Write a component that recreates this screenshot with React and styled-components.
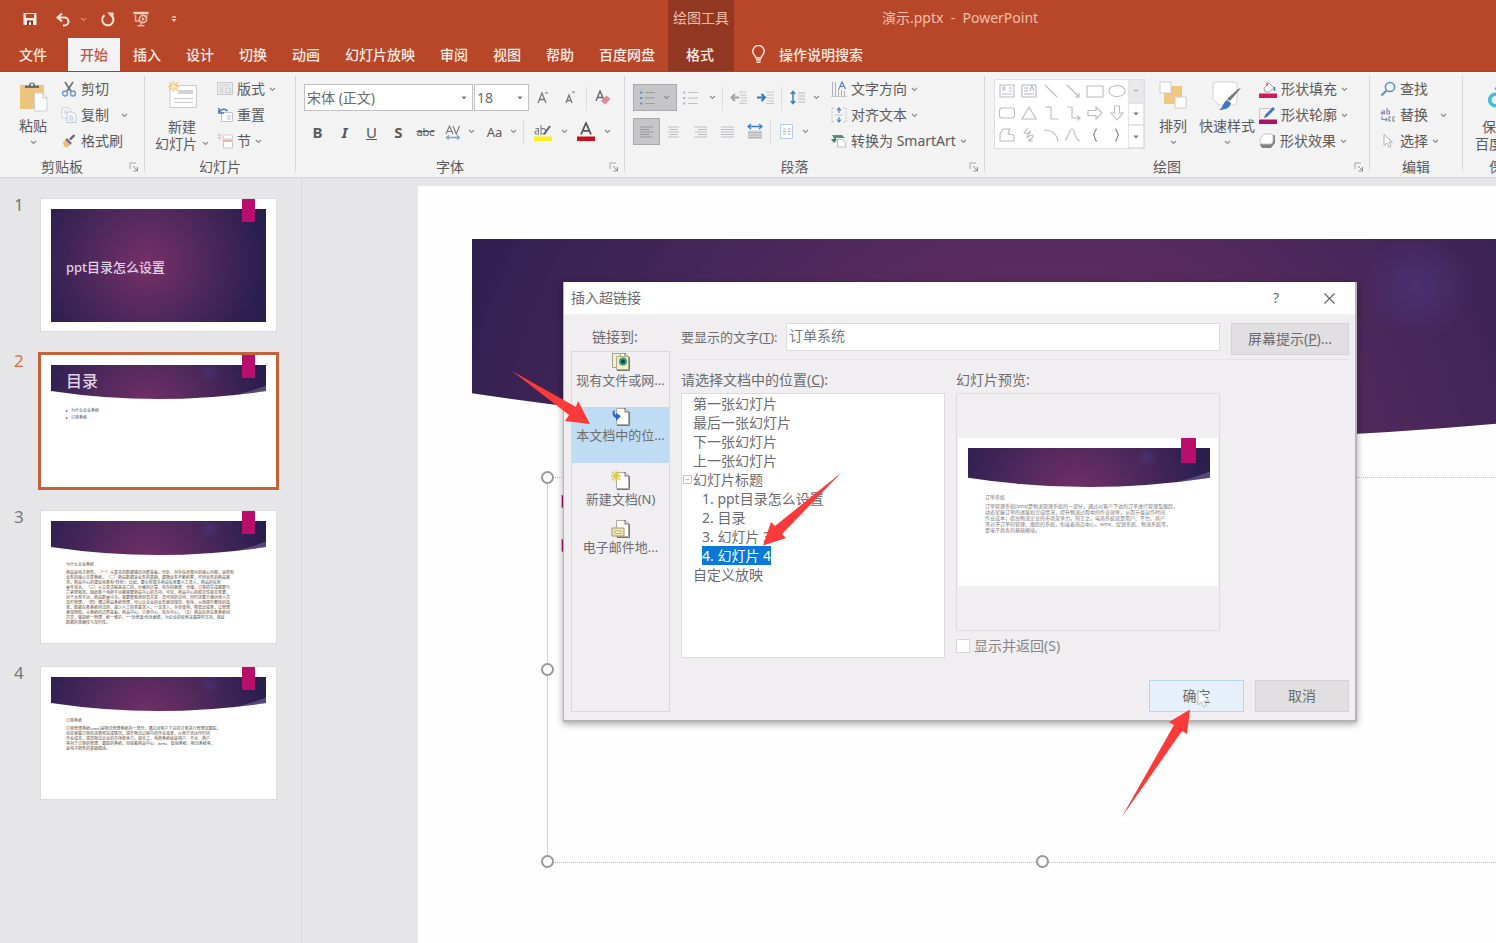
import React from "react";
import styled, { createGlobalStyle } from "styled-components";

const GlobalStyle = createGlobalStyle`
  *, *::before, *::after { box-sizing: border-box; }
  body { margin: 0; background: #e6e6e8; }
  body, button, input, select {
    font-family: "Noto Sans", "Noto Sans CJK SC", sans-serif;
    font-size: 14px;
    line-height: 18px;
  }
  button { border: 0; padding: 0; margin: 0; background: none; color: inherit; text-align: left; }
  ul, h1, h2, p { margin: 0; padding: 0; list-style: none; font-weight: 400; }
`;

const Window = styled.div`
  position: relative;
  display: flex;
  flex-direction: column;
  height: 100vh;
  overflow: hidden;
  color: #5a5a5c;
`;

/* ---------- title bar and tabs ---------- */

const Header = styled.header`
  display: flex;
  flex: none;
  background: #b8472a;
  border-bottom: 1px solid #b53d10;
  color: #ffe9e0;
`;

const HeaderColumn = styled.div`
  display: flex;
  flex-direction: column;
  flex: ${(p) => (p.$grow ? "1" : "none")};
  background: ${(p) => (p.$dark ? "#923822" : "transparent")};
`;

const QuickAccess = styled.div`
  display: flex;
  align-items: center;
  height: 38px;
  padding-left: 20px;
`;

const QuickButton = styled.button`
  display: flex;
  justify-content: center;
  width: ${(p) => p.$width}px;
  margin-right: ${(p) => p.$after || 0}px;
`;

const TabBar = styled.nav`
  display: flex;
  gap: 1px;
  height: 33px;
  padding-right: 1px;
`;

const Tab = styled.button`
  height: 33px;
  padding: ${(p) => (p.$file ? "0 20px 0 19px" : "0 12px")};
  font-weight: 500;
  color: ${(p) => (p.$active ? "#c4543f" : "#ffece4")};
  background: ${(p) => (p.$active ? "#f3f3f3" : "transparent")};
`;

const ContextTitle = styled.div`
  height: 38px;
  padding: 9px 5px 0;
  color: #f0bda9;
`;

const ContextTab = styled(Tab)`
  padding: 0 18px;
`;

const DocumentTitle = styled.h1`
  height: 38px;
  padding: 9px 0 0 148px;
  font-size: 14px;
  line-height: 18px;
  color: #f6bfa9;
  white-space: pre;
`;

const TellMe = styled.button`
  display: flex;
  align-items: center;
  gap: 13px;
  height: 33px;
  padding-left: 17px;
  font-weight: 500;
`;

/* ---------- ribbon ---------- */

const RibbonBar = styled.section`
  display: flex;
  flex: none;
  height: 106px;
  padding-top: 4px;
  overflow: hidden;
  background: #f3f3f3;
  border-bottom: 1px solid #d6d6d8;
`;

const Divider = styled.div`
  flex: none;
  width: 1px;
  height: 95px;
  background: #d5d5d7;
`;

const GroupBox = styled.div`
  display: flex;
  flex-direction: column;
  flex: none;
  width: ${(p) => p.$width}px;
`;

const GroupBody = styled.div`
  display: flex;
  height: 78px;
  padding-left: ${(p) => p.$left}px;
`;

const GroupFooter = styled.div`
  display: flex;
  align-items: center;
  height: 23px;
  padding-top: 3px;
`;

const GroupLabel = styled.div`
  flex: 1;
  text-align: center;
`;

const Launcher = styled.button`
  width: 20px;
  padding-left: 5px;
`;

const BigButton = styled.button`
  display: flex;
  flex-direction: column;
  align-items: center;
  flex: none;
  width: ${(p) => p.$width}px;
  margin-right: ${(p) => p.$after || 0}px;
  padding-top: 5px;
  white-space: nowrap;
  line-height: 17px;
`;

const BigIcon = styled.span`
  display: block;
  height: ${(p) => (p.$tall ? 37 : 30)}px;
`;

const BigLabel = styled.span`
  display: flex;
  align-items: center;
  gap: 5px;
  margin-top: ${(p) => (p.$tight ? 0 : 6)}px;
`;

const CommandList = styled.div`
  display: grid;
  grid-auto-rows: 26px;
  justify-items: start;
  margin-left: ${(p) => p.$left || 0}px;
`;

const Command = styled.button`
  display: flex;
  align-items: center;
  white-space: nowrap;
  gap: 4px;
`;

const CommandArrow = styled.span`
  display: flex;
  margin-left: ${(p) => (p.$wide ? 8 : 0)}px;
`;

const ToolRows = styled.div`
  display: flex;
  flex-direction: column;
  gap: 7px;
  padding-top: 8px;
`;

const ToolRow = styled.div`
  display: flex;
  align-items: center;
  height: 27px;
`;

const Tool = styled.button`
  display: flex;
  align-items: center;
  justify-content: center;
  flex: none;
  gap: 8px;
  width: ${(p) => p.$width || 27}px;
  height: 27px;
  margin-left: ${(p) => p.$left || 0}px;
  border: 1px solid ${(p) => (p.$on ? "#a9a9ab" : "transparent")};
  background: ${(p) => (p.$on ? "#c6c6c8" : "transparent")};
  font-size: ${(p) => p.$size || 15}px;
  font-weight: ${(p) => (p.$bold ? 700 : 400)};
  font-style: ${(p) => (p.$italic ? "italic" : "normal")};
  text-decoration: ${(p) => p.$line || "none"};
`;

const ToolDivider = styled.div`
  width: 1px;
  height: 24px;
  margin: 0 ${(p) => p.$gap}px;
  background: #dcdcde;
`;

const Combo = styled.label`
  display: flex;
  align-items: center;
  width: ${(p) => p.$width}px;
  height: 27px;
  margin-right: 1px;
  padding-right: 5px;
  background: #fff;
  border: 1px solid #c2c2c4;
`;

const ComboSelect = styled.select`
  flex: 1;
  min-width: 0;
  padding: 0 2px;
  border: 0;
  background: transparent;
  color: #6a6a6c;
  appearance: none;
`;

const Gallery = styled.div`
  display: flex;
  width: 151px;
  height: 70px;
  margin: 3px 13px 0 0;
  background: #fff;
  border: 1px solid #dedee0;
`;

const GalleryGrid = styled.div`
  display: grid;
  flex: 1;
  grid-template-columns: repeat(6, 22px);
  grid-auto-rows: 22px;
  padding-left: 1px;
`;

const GalleryItem = styled.button`
  display: flex;
  align-items: center;
  justify-content: center;
`;

const GalleryScroll = styled.div`
  display: grid;
  grid-template-rows: repeat(3, 1fr);
  width: 16px;
`;

const ScrollButton = styled.button`
  display: flex;
  align-items: center;
  justify-content: center;
  border: 1px solid #e4e4e6;
  background: ${(p) => (p.$off ? "#e9e9eb" : "#fff")};
`;

/* ---------- workspace ---------- */

const Workspace = styled.main`
  display: flex;
  flex: 1;
  min-height: 0;
  background: #e6e6e8;
`;

const ThumbPane = styled.aside`
  flex: none;
  width: 302px;
  padding: 18px 0 0 14px;
  border-right: 1px solid #d8d8da;
`;

const ThumbRow = styled.button`
  display: flex;
  align-items: flex-start;
  width: 100%;
  height: 156px;
`;

const ThumbNumber = styled.span`
  width: 24px;
  font-size: 17px;
  color: ${(p) => (p.$active ? "#d8694e" : "#77777a")};
`;

const ThumbFrame = styled.span`
  display: block;
  margin: ${(p) => (p.$active ? "0" : "3px")};
  border: ${(p) => (p.$active ? "3px solid #c4623a" : "0")};
`;

const SlideCard = styled.span`
  position: relative;
  display: block;
  width: ${(p) => p.$width}px;
  height: ${(p) => p.$height}px;
  padding: 10px;
  background: #fff;
  box-shadow: ${(p) => (p.$flat ? "none" : "0 0 0 1px #dcdcde")};
`;

const SlideTab = styled.span`
  position: absolute;
  top: 0;
  right: ${(p) => p.$right}px;
  width: ${(p) => p.$width}px;
  height: ${(p) => p.$height}px;
  background: #b90f6c;
`;

const SlideTitle = styled.span`
  position: absolute;
  left: 25px;
  top: ${(p) => p.$top}px;
  font-size: ${(p) => p.$size}px;
  font-weight: 500;
  color: #e2d2e6;
`;

const SlideText = styled.span`
  display: block;
  padding: ${(p) => p.$top}px 0 0 ${(p) => p.$left}px;
  font-size: ${(p) => p.$size || 4}px;
  line-height: ${(p) => p.$line}px;
  color: ${(p) => (p.$size ? "#77777a" : "#4c4c4e")};
  white-space: nowrap;
`;

const SlideLine = styled.span`
  display: block;
  margin-bottom: ${(p) => (p.$heading ? 3 : 0)}px;
  &::before {
    content: ${(p) => (p.$bullet ? '"▸"' : "none")};
    margin-right: 3px;
    color: #b90f6c;
  }
`;

const Canvas = styled.section`
  flex: 1;
  min-width: 0;
  padding: 8px 0 0 116px;
  overflow: hidden;
`;

const BigSlide = styled.div`
  position: relative;
  height: 100%;
  padding: 53px 0 0 54px;
  background: #fefefe;
  overflow: hidden;
`;

const Placeholder = styled.div`
  position: absolute;
  left: 129px;
  top: 291px;
  width: 991px;
  height: 386px;
  border: 1px dotted #b9b9bb;
  border-left: 1px solid #cfcfd1;
`;

const Handle = styled.span`
  position: absolute;
  left: ${(p) => p.$x};
  top: ${(p) => p.$y};
  width: 13px;
  height: 13px;
  margin: -7px;
  border: 2px solid #98989a;
  border-radius: 50%;
  background: #fff;
`;

const BulletMarks = styled.ul`
  padding: 14px 0 0 12px;
  color: #96105c;
  li { height: 44px; }
`;

/* ---------- dialog ---------- */

const DialogBox = styled.section`
  position: absolute;
  left: 563px;
  top: 282px;
  width: 794px;
  height: 440px;
  display: flex;
  flex-direction: column;
  background: #f0eef1;
  border: 1px solid #b4b4b6;
  border-width: 0 2px 2px 1px;
  box-shadow: 0 2px 7px rgba(0, 0, 0, 0.35);
  color: #6c6c6f;
`;

const DialogHeader = styled.div`
  display: flex;
  align-items: center;
  height: 32px;
  padding: 0 20px 0 7px;
  background: #fff;
`;

const DialogTitle = styled.h2`
  flex: 1;
  font-size: 14px;
`;

const DialogControl = styled.button`
  display: flex;
  justify-content: center;
  width: 12px;
  margin-left: 41px;
`;

const DialogBody = styled.div`
  display: flex;
  flex: 1;
  gap: 11px;
  padding: 9px 6px 8px 7px;
`;

const LinkColumn = styled.div`
  display: flex;
  flex-direction: column;
  width: 99px;
`;

const LinkHeading = styled.div`
  height: 28px;
  padding: 5px 0 0 21px;
`;

const LinkList = styled.div`
  flex: 1;
  border: 1px solid #d9d8db;
`;

const LinkItem = styled.button`
  display: flex;
  flex-direction: column;
  align-items: center;
  width: 100%;
  height: ${(p) => p.$height}px;
  padding-top: ${(p) => p.$top}px;
  background: ${(p) => (p.$active ? "#c0dcf5" : "transparent")};
  font-size: 13px;
  white-space: nowrap;
`;

const MainColumn = styled.div`
  display: flex;
  flex: 1;
  flex-direction: column;
`;

const TextRow = styled.div`
  display: flex;
  align-items: flex-start;
  height: 37px;
  border-bottom: 1px solid #e4e2e6;
`;

const TextLabel = styled.label`
  width: 105px;
  padding-top: 5px;
  font-size: 13px;
  white-space: nowrap;
`;

const TextInput = styled.input`
  flex: 1;
  min-width: 0;
  height: 28px;
  margin-right: 11px;
  padding: 0 2px 5px;
  border: 1px solid #dddce0;
  background: #fff;
  color: #77777a;
`;

const DialogButton = styled.button`
  width: ${(p) => p.$width}px;
  height: 32px;
  text-align: center;
  border: 1px solid ${(p) => (p.$primary ? "#b5d5ec" : "#d3d2d5")};
  background: ${(p) => (p.$primary ? "#e5f0fb" : "#e1dfe2")};
`;

const Columns = styled.div`
  display: flex;
  gap: 11px;
  height: 298px;
  padding-top: 11px;
`;

const Column = styled.div`
  display: flex;
  flex-direction: column;
  width: 264px;
`;

const ColumnLabel = styled.div`
  height: 22px;
`;

const Tree = styled.ul`
  height: 265px;
  padding: 0 0 0 5px;
  border: 1px solid #dcdbde;
  background: #fff;
  line-height: 19px;
`;

const TreeItem = styled.li`
  display: flex;
  align-items: center;
  height: 19px;
  padding-left: ${(p) => (p.$level ? 15 : p.$open ? 0 : 6)}px;
`;

const TreeToggle = styled.span`
  display: flex;
  width: 10px;
  margin-left: -4px;
`;

const TreeLabel = styled.button`
  height: 19px;
  line-height: 18px;
  white-space: nowrap;
  color: ${(p) => (p.$selected ? "#fff" : "inherit")};
  background: ${(p) => (p.$selected ? "#0a78d7" : "transparent")};
`;

const Preview = styled.div`
  display: flex;
  align-items: center;
  height: 238px;
  margin-bottom: 6px;
  padding: 0 1px;
  border: 1px solid #dcdbde;
`;

const CheckLabel = styled.label`
  display: flex;
  align-items: center;
  gap: 4px;
  color: #858588;
`;

const CheckInput = styled.input`
  appearance: none;
  width: 14px;
  height: 14px;
  margin: 0;
  border: 1px solid #d6d5d8;
  background: #fff;
`;

const DialogFooter = styled.div`
  display: flex;
  justify-content: flex-end;
  gap: 11px;
  margin-top: auto;
`;

const Annotations = styled.svg`
  position: absolute;
  left: 0;
  top: 0;
  pointer-events: none;
`;

/* ---------- icons ---------- */

const IconSvg = styled.svg`
  display: block;
  flex: none;
  fill: none;
`;

const Icon = ({ w = 16, h = w, children }) => (
  <IconSvg width={w} height={h} viewBox={`0 0 ${w} ${h}`} aria-hidden="true">
    {children}
  </IconSvg>
);

const Chevron = ({ color = "#8c8c8e" }) => (
  <Icon w={7} h={5}>
    <path d="M1 1l2.5 2.4L6 1" stroke={color} strokeWidth="1.1" />
  </Icon>
);

const Caret = ({ color = "#77777a" }) => (
  <Icon w={6} h={4}>
    <path d="M0.5 0.5h5L3 3.5z" fill={color} />
  </Icon>
);

const SaveIcon = () => (
  <Icon w={14}>
    <path d="M0.5 1h13v12h-13z" fill="#ffe9e0" />
    <path d="M3 2h8v4H3z" fill="#b8472a" />
    <path d="M4 8.5h6V13H4z" fill="#8a3520" />
    <path d="M6 10h2v3H6z" fill="#fff" />
  </Icon>
);

const UndoIcon = () => (
  <Icon w={15}>
    <path d="M6 1.5L1.5 5.5 6 9.5M2 5.5h6.5a4 4 0 010 8H7" stroke="#ffe4d8" strokeWidth="2.1" />
  </Icon>
);

const RedoIcon = () => (
  <Icon w={15}>
    <path d="M4.5 3.2A5.6 5.6 0 1010 2.6" stroke="#ffe0c8" strokeWidth="2.1" />
    <path d="M7 0.5h6.500v6.300z" fill="#ffe0c8" />
  </Icon>
);

const SlideShowIcon = () => (
  <Icon w={16}>
    <path d="M0.5 2h15" stroke="#ffd9c4" strokeWidth="2.4" />
    <path d="M2.5 4v6H7M13.5 4v3M8 11v3M4.5 14.8h7" stroke="#f0b09a" strokeWidth="1.6" />
    <circle cx="10" cy="8" r="3.6" stroke="#f5c1ad" strokeWidth="1.6" />
    <path d="M9 6l3 2-3 2z" fill="#f5c1ad" />
  </Icon>
);

const CustomizeIcon = () => (
  <Icon w={6} h={7}>
    <path d="M1 1h4" stroke="#ffe0d2" strokeWidth="1.2" />
    <path d="M0.5 3h5L3 6z" fill="#ffe0d2" />
  </Icon>
);

const BulbIcon = () => (
  <Icon w={15} h={19}>
    <path d="M5 13c0-2-3.2-3.2-3.2-6.8a5.7 5.7 0 0111.4 0C13.200 9.800 10 11 10 13z" stroke="#ffe4d8" strokeWidth="1.5" />
    <path d="M5 15h5M5.500 17.300h4" stroke="#ffe4d8" strokeWidth="1.500" />
  </Icon>
);

const PasteIcon = () => (
  <Icon w={30} h={31}>
    <path d="M2 4h24v24H2z" fill="#ecc47c" />
    <path d="M7 7V4.500h4a3 3 0 016 0h4V7z" fill="#6d6d72" />
    <circle cx="14" cy="3.800" r="1.200" fill="#f3f3f3" />
    <path d="M16.500 12h8.500l4 5v13H16.500z" fill="#fff" stroke="#d0d0d2" />
    <path d="M25 12v5h4" stroke="#c4c4c6" />
  </Icon>
);

const CutIcon = () => (
  <Icon w={16}>
    <path d="M4 1l6.500 10M12 1L5.500 11" stroke="#6e6e72" strokeWidth="1.600" />
    <circle cx="4" cy="12.500" r="2.500" stroke="#6c9bd0" strokeWidth="1.400" />
    <circle cx="12" cy="12.500" r="2.500" stroke="#6c9bd0" strokeWidth="1.400" />
  </Icon>
);

const CopyIcon = () => (
  <Icon w={16}>
    <path d="M1 .8h6l2.500 2.500V11H1z" fill="#fbfbfc" stroke="#cfcfd4" />
    <path d="M6 5h6l3 3v7.500H6z" fill="#fbfbfc" stroke="#b9c7da" />
    <path d="M3 4h3M3 6h2M8 9h4M8 11h5M8 13h5" stroke="#b4cbe6" />
  </Icon>
);

const BrushIcon = () => (
  <Icon w={16}>
    <path d="M13.500 2L9 6.500" stroke="#66666a" strokeWidth="2.400" />
    <path d="M6 5l5 5-2 2-5-5z" fill="#77777b" />
    <path d="M4 7l5 5-3 2.500c-2 0-4-2-4-5z" fill="#efbd6a" />
  </Icon>
);

const NewSlideIcon = () => (
  <Icon w={31} h={29}>
    <path d="M3 4.500h26.500v22H3z" fill="#fff" stroke="#cbcbce" />
    <path d="M11 9h15v4H11z" fill="#d3d3d6" />
    <path d="M7 17.500h19M7 21.500h19" stroke="#cfcfd2" />
    <path d="M6.500 0v11M1 5.500h11M2.600 1.600l7.800 7.800M10.400 1.600L2.600 9.400" stroke="#f2c47c" strokeWidth="1.500" />
    <circle cx="6.500" cy="5.500" r="2.300" fill="#fbe8c4" />
  </Icon>
);

const LayoutIcon = () => (
  <Icon w={16}>
    <path d="M.5 1.500h15v12H.5z" fill="#ebebed" stroke="#c9c9cc" />
    <path d="M2.500 4h11M2.500 7h4M2.500 9h4M2.500 11h4M9 7h4.500v4.500H9z" stroke="#c8cbd2" />
  </Icon>
);

const ResetIcon = () => (
  <Icon w={16}>
    <path d="M4.500 5.500h11v9h-11z" fill="#fff" stroke="#c3c3c7" />
    <path d="M10 8h4v5h-4z" fill="#e0e0e4" />
    <path d="M2 1v5h5M2.500 5C4 2 8 1 10.500 4" stroke="#4b79b5" strokeWidth="1.600" />
  </Icon>
);

const SectionIcon = () => (
  <Icon w={16}>
    <path d="M6.500 2h9v4h-9z" fill="#fff" stroke="#d0d0d3" />
    <path d="M6.500 8.500h9v6.500h-9z" fill="#fff" stroke="#c6c6ca" />
    <path d="M5 7.300h11" stroke="#e8a393" />
    <path d="M0 1l5 5M5 1L0 6M2.500 0v7" stroke="#f2c98a" />
  </Icon>
);

const GrowFont = ({ down }) => (
  <Icon w={14} h={16}>
    <path d={down ? "M2 13l3-8 3 8M3 10.500h4" : "M1 13l4-10 4 10M2.500 9.500h5"} stroke="#77777a" strokeWidth="1.300" />
    <path d={down ? "M7.500 1.500h4L9.500 3.500z" : "M7.500 3.500h4L9.500 1.500z"} fill="#8e8e92" />
  </Icon>
);

const ClearIcon = () => (
  <Icon w={16}>
    <path d="M1 11L5 1l4 9M2.500 7.500h5" stroke="#66666a" strokeWidth="1.400" />
    <path d="M6 11l5.500-5.500L15.500 9 10 14.500z" fill="#e8899a" />
  </Icon>
);

const SpacingIcon = () => (
  <Icon w={16} h={18}>
    <path d="M1 11L4.500 3 8 11M2.200 8.500h4.600M8 3l3.300 8L14.500 3" stroke="#77777a" strokeWidth="1.100" />
    <path d="M1.500 14.500h13M4 12.500l-2.500 2 2.500 2M12 12.500l2.500 2-2.500 2" stroke="#7aa3d6" strokeWidth="1.300" />
  </Icon>
);

const HighlightIcon = () => (
  <Icon w={18} h={18}>
    <path d="M1.500 5.500h3V11H2a1.600 1.600 0 010-3h2.500M7 2v9h2a2.700 2.700 0 000-5.400H7" stroke="#808084" strokeWidth="1.100" />
    <path d="M16 3l-6 8.500" stroke="#66666a" strokeWidth="2" />
    <path d="M0 13.500h18V18H0z" fill="#f7f01a" />
  </Icon>
);

const FontColorIcon = () => (
  <Icon w={18} h={19}>
    <path d="M4 12.500L9 1l5 11.500M5.500 8.800h7" stroke="#55555a" strokeWidth="1.800" />
    <path d="M0 14.500h18V19H0z" fill="#c8101c" />
  </Icon>
);

const ListIcon = ({ color = "#6d8fbd", line = "#9a9aa0" }) => (
  <Icon w={15} h={14}>
    <path d="M0 1.500h2.500M0 7h2.500M0 12.500h2.500" stroke={color} strokeWidth="2" />
    <path d="M5 1.500h10M5 7h10M5 12.500h10" stroke={line} />
  </Icon>
);

const IndentIcon = ({ out }) => (
  <Icon w={17} h={13}>
    <path d="M9 1h8M10 4h7M10 7h7M10 10h7M9 12.500h8" stroke="#c6c6cb" />
    {out ? (
      <path d="M9 6.500H1.500M5 3L1.500 6.500 5 10" stroke="#a2a2a7" strokeWidth="1.800" />
    ) : (
      <path d="M0 6.500h7.500M4.500 3L8 6.500 4.500 10" stroke="#2f78c4" strokeWidth="2" />
    )}
  </Icon>
);

const LineSpacingIcon = () => (
  <Icon w={15} h={15}>
    <path d="M3 1.500v12M.8 4L3 1.500 5.200 4M.8 11L3 13.500 5.200 11" stroke="#3f7fc4" strokeWidth="1.500" />
    <path d="M8 3h7M8 6h7M8 9h7M8 12h7" stroke="#b9b9be" />
  </Icon>
);

const AlignIcon = ({ kind = "left", color = "#bdbdc2" }) => {
  const path = {
    left: "M0 1h13M0 3.500h9M0 6h13M0 8.500h9M0 11h12",
    center: "M1 1h11M2.500 3.500h8M1 6h11M2.500 8.500h8M1 11h11",
    right: "M0 1h13M4 3.500h9M1 6h12M4 8.500h9M0 11h13",
    full: "M0 1h13M0 3.500h13M0 6h13M0 8.500h13M0 11h13",
  }[kind];
  return (
    <Icon w={13} h={12}>
      <path d={path} stroke={color} />
    </Icon>
  );
};

const DistributeIcon = () => (
  <Icon w={16} h={17}>
    <path d="M1 3.500h14M4 1L1 3.500 4 6M12 1l3 2.500L12 6" stroke="#3f7fc4" strokeWidth="1.400" />
    <path d="M1 7.500h14V16H1z" fill="#d3d3d8" />
    <path d="M1 9.500h14M1 12h14M1 14.500h14" stroke="#b4b4ba" />
  </Icon>
);

const ColumnsIcon = () => (
  <Icon w={13} h={15}>
    <path d="M.5.500h12v14H.5z" fill="#fff" stroke="#b9cbe4" />
    <path d="M3 5h3M3 7.500h3M3 10h3M7.500 5h3M7.500 7.500h3M7.500 10h3" stroke="#9ab4da" />
  </Icon>
);

const DirectionIcon = () => (
  <Icon w={16} h={17}>
    <path d="M1.500 1v14M4.500 1v14M7.500 8v7M10.500 9v6M13.500 10v5" stroke="#b0b0b6" />
    <path d="M8 8l3-7 3.500 7M9.200 5.500h4" stroke="#5b86c2" strokeWidth="1.200" />
    <path d="M0 15.500h16" stroke="#c5c5ca" />
  </Icon>
);

const AlignTextIcon = () => (
  <Icon w={16}>
    <path d="M1 1v14M15 1v14M1 1h3M12 1h3M1 15h3M12 15h3" stroke="#c6c6cc" strokeDasharray="2 1" />
    <path d="M8 1v5M8 10v5M6 3.500L8 1l2 2.500M6 12.500L8 15l2-2.500" stroke="#4a82c2" strokeWidth="1.200" />
    <path d="M4 8h8" stroke="#c4c4ca" />
  </Icon>
);

const SmartArtIcon = () => (
  <Icon w={16}>
    <path d="M1 2h10l3 3H5v4z" fill="#4d9377" />
    <path d="M3 10L0 6h6z" fill="#3d8468" />
    <path d="M6.500 6.500h5l3 3.500v4h-8z" fill="#fff" stroke="#c0c0c6" />
  </Icon>
);

const ArrangeIcon = () => (
  <Icon w={28} h={28}>
    <path d="M11 5h12v12H11zM5 12h12v11H5z" fill="#efc682" />
    <path d="M1 1h11v11H1zM16 16h11v11H16z" fill="#fff" stroke="#cbcbce" />
  </Icon>
);

const QuickStyleIcon = () => (
  <Icon w={30} h={30}>
    <path d="M4 1h18a3 3 0 013 3v17a3 3 0 01-3 3H7l-6-6V4a3 3 0 013-3z" fill="#fff" stroke="#d2d2d5" />
    <path d="M29 7L18 20l-3-2L26 8z" fill="#77777c" />
    <path d="M15 19l4 3c-1 5-6 7-12 7 4-2 4-8 8-10z" fill="#4477ba" />
  </Icon>
);

const FillIcon = () => (
  <Icon w={18} h={17}>
    <path d="M5 7l5-5 5 5-5 4H6z" fill="#fff" stroke="#a4a4a9" />
    <path d="M8 5V1.500" stroke="#e05c4a" strokeWidth="1.400" />
    <path d="M15.500 6v4" stroke="#4a82c2" strokeWidth="1.600" />
    <path d="M0 12.500h18V17H0z" fill="#d6175f" />
  </Icon>
);

const OutlineIcon = () => (
  <Icon w={18} h={17}>
    <path d="M.5 11V1.500H14" stroke="#c6c6cb" />
    <path d="M16 2L8 10l-3 1 1-3 8-8z" fill="#3f78b8" />
    <path d="M0 12.500h18V17H0z" fill="#ad1164" />
  </Icon>
);

const EffectIcon = () => (
  <Icon w={17} h={16}>
    <path d="M5 2h10a1 1 0 011 1v7l-4 5H3l-2-3z" fill="#808085" />
    <path d="M5 1h7a2 2 0 012 2v5a3 3 0 01-3 3H3a2 2 0 01-2-2V6z" fill="#fff" stroke="#c4c4c8" />
  </Icon>
);

const FindIcon = () => (
  <Icon w={16}>
    <circle cx="10" cy="6" r="4.600" stroke="#5e8fca" strokeWidth="1.500" />
    <path d="M6.500 9.500L1.500 14.500" stroke="#5e8fca" strokeWidth="2" />
  </Icon>
);

const ReplaceIcon = () => (
  <Icon w={16}>
    <path d="M1.500 4h3v3h-3V5.500h3M7 1v6h2.500V4H7" stroke="#9a86b8" strokeWidth="1.200" />
    <path d="M2 9.500v3h5M5.500 11L7 12.500 5.500 14" stroke="#6c8fc4" strokeWidth="1.200" />
    <path d="M11 10H9v4h2M15 10h-2v4h2" stroke="#88888c" strokeWidth="1.200" />
  </Icon>
);

const SelectIcon = () => (
  <Icon w={16}>
    <path d="M4 1.500v11l3-2.500 2 4.500 2-1-2-4.300h3.500z" fill="#fff" stroke="#b0b0b4" />
  </Icon>
);

const CloudIcon = () => (
  <Icon w={30} h={31}>
    <path d="M12 14a6.500 6.500 0 112 12" stroke="#e45b68" strokeWidth="3.500" />
    <circle cx="7.500" cy="19" r="5.800" stroke="#3fbfe0" strokeWidth="3.500" />
    <path d="M8 9a7 7 0 0113 0" stroke="#8f9bb5" strokeWidth="3.500" />
  </Icon>
);

const LauncherIcon = () => (
  <Icon w={10}>
    <path d="M1 7V1h6" stroke="#a5a5a8" />
    <path d="M4 4l4 4M8.500 5v4h-4" stroke="#8b8b8e" />
  </Icon>
);

const ShapeGlyph = ({ d, color = "#bcbcc0", width = 1.1 }) => (
  <Icon w={18}>
    <path d={d} stroke={color} strokeWidth={width} />
  </Icon>
);

const shapes = [
  { d: "M2 3h14v12H2zM4 6h4M6 4v4M4 8h3M11 6h3M11 9h3M4 12h10", color: "#b9b9cc" },
  { d: "M2 3h14v12H2zM10 9l2-5 2 5M4 6h4M4 9h4M4 12h10", color: "#b4b4cc" },
  { d: "M3 3l12 12" },
  { d: "M3 3l12 12M15 11v4h-4" },
  { d: "M1 4h16v11H1z" },
  { d: "M9 3.500c5 0 8 2.500 8 5.500s-3 5.500-8 5.500S1 12 1 9s3-5.500 8-5.500z" },
  { d: "M4 4h10a2.500 2.500 0 012.500 2.500v5A2.500 2.500 0 0114 14H4a2.500 2.500 0 01-2.500-2.500v-5A2.500 2.500 0 014 4z" },
  { d: "M9 3l7 12H2z" },
  { d: "M3 3h6v12h7" },
  { d: "M3 3h5v11h8M13 11.500l3 2.500-3 2.500" },
  { d: "M2 6.500h8V3l6 6-6 6v-3.500H2z" },
  { d: "M6.500 2v7H3l6 7 6-7h-3.500V2z" },
  { d: "M5 3h7l-2 4c1 3 5 0 6 3v5H2V8z" },
  { d: "M8 2L4 7l3 1 4-3-4 6 5-2 1 2-4 4M9 12v3h4" },
  { d: "M2 4c8 0 13 3 14 12" },
  { d: "M1 14C4 14 5 3 8 3s3 12 8 12" },
  { d: "M11 3C8 3 9.500 9 7 9c2.500 0 1 6 4 6", color: "#8a8a8d", width: 1.2 },
  { d: "M7 3c3 0 1.500 6 4 6-2.500 0-1 6-4 6", color: "#8a8a8d", width: 1.2 },
];

const PageIcon = ({ kind }) => (
  <Icon w={20} h={19}>
    <path d="M5.500 1.500h9l3 3V17.500h-12z" fill="#fdfdfd" stroke="#aaa9a2" />
    <path d="M18.500 5v13.500H6" stroke="#77776f" />
    <path d="M14 1v4h4" stroke="#66665f" />
    {kind === "web" && (
      <>
        <path d="M1.500 1.500h8v14h-8z" fill="#f3eed2" stroke="#a9a58c" />
        <path d="M5.500 4.500h12v13h-12z" fill="#efeec4" stroke="#aaa989" />
        <circle cx="12" cy="9.500" r="4" fill="#3a9a74" />
        <circle cx="12" cy="9.500" r="2" fill="#173f5c" />
      </>
    )}
    {kind === "place" && <path d="M2 4c-1 3 0 6 3 7v3l5-5-5-3v2C3.500 7 3 6 4 3z" fill="#2b63cf" />}
    {kind === "new" && <path d="M1 1l8 8M9 1L1 9M5 0v10M0 5h10" stroke="#dcc94e" strokeWidth="1.500" />}
    {kind === "mail" && (
      <>
        <path d="M1 9h12v8H1z" fill="#f5e7b0" stroke="#9b9478" />
        <path d="M4 12h6v2.500H4z" fill="#fffbe0" stroke="#b7ac80" />
      </>
    )}
  </Icon>
);

/* ---------- slide drawing ---------- */

const Banner = ({ id, width, height, full }) => (
  <svg
    width={width}
    height={height}
    viewBox={full ? "0 0 240 126" : "0 0 240 38"}
    preserveAspectRatio="none"
    display="block"
    aria-hidden="true"
  >
    <defs>
      <radialGradient id={id} gradientUnits="userSpaceOnUse" cx="108" cy={full ? 60 : 52} r="130">
        <stop offset="0" stopColor="#762f68" />
        <stop offset="0.4" stopColor="#562a5e" />
        <stop offset="1" stopColor="#2a1e4f" />
      </radialGradient>
      <radialGradient id={`${id}-glow`}>
        <stop offset="0" stopColor="#493070" />
        <stop offset="1" stopColor="#493070" stopOpacity="0" />
      </radialGradient>
    </defs>
    <path d={full ? "M0 0H240V126H0z" : "M0 0H240V29Q120 47 0 29z"} fill={`url(#${id})`} />
    {!full && <ellipse cx="177" cy="9" rx="11" ry="10" fill={`url(#${id}-glow)`} />}
    {!full && <path d="M205 33.500Q225 29 240 23V29Q222 32 205 33.500z" fill="#8d7ba6" opacity="0.45" />}
  </svg>
);

const orderText = [
  "订单管理系统(oms)是物流管理系统的一部分，通过对客户下达的订单进行管理及跟踪，",
  "动态掌握订单的进展和完成情况，提升物流过程中的作业效率，从而节省运作时间",
  "作业成本，提高物流企业的市场竞争力。简言之，电商系统就是用户、平台、商户",
  "等对于订单的管理、跟踪的系统，衔接着商品中心、wms、促销系统、物流系统等，",
  "是电子商务的基础模块。",
];

const featureText = [
  "商品是电子商务，（一）从基本的数据输出功能来看，分析、对外信息展示的核心内容，是所有",
  "业务的核心支撑系统。（二）商品数据是业务的基础，跟随业务不断积累，不同业务的商品需",
  "求，商品中心的建设也各有“特色”。比如，要么有很多商品信息要人工录入，商品的信息",
  "量非常大。（三）从交易流程来说它的，价格的计算、库存的更新、仓储，订单的生成都要与",
  "它紧密相连。因此各个电商平台都需要商品中心的支持。可见，商品中心的稳定性极其重要，",
  "对于大型平台，商品数量众多，需要能够承担高并发、高可用的访问，同时还要方便运营人员",
  "及时管理。（四）通过商品系统管理，可以让企业的业务更加规范、有序，从而提升整体的效",
  "率，数据在各系统间流转，减少人工的重复录入，一次录入，多处使用，降低出错率，让管理",
  "更加轻松。从系统的边界来看，商品中心、订单中心、库存中心，（五）商品信息在各系统间",
  "共享，做到统一管理、统一维护，“一处修改”处处更新，为企业的经营决策提供支持，保证",
  "数据的准确性与及时性。",
];

const ThumbSlide = ({ index }) => (
  <SlideCard $width={235} $height={132} $flat={index === 2}>
    {index === 1 ? (
      <>
        <Banner id="thumb1" width="215" height="113" full />
        <SlideTitle $top={59} $size={13}>ppt目录怎么设置</SlideTitle>
      </>
    ) : (
      <Banner id={`thumb${index}`} width="215" height="34" />
    )}
    {index === 2 && (
      <>
        <SlideTitle $top={17} $size={16}>目录</SlideTitle>
        <SlideText $top={8} $left={15} $line={7}>
          <SlideLine $bullet>为什么企业系统</SlideLine>
          <SlideLine $bullet>订单系统</SlideLine>
        </SlideText>
      </>
    )}
    {index === 3 && (
      <SlideText $top={7} $left={15} $line={5}>
        <SlideLine $heading>为什么企业系统</SlideLine>
        {featureText.map((line) => <SlideLine key={line}>{line}</SlideLine>)}
      </SlideText>
    )}
    {index === 4 && (
      <SlideText $top={7} $left={15} $line={5}>
        <SlideLine $heading>订单系统</SlideLine>
        {orderText.map((line) => <SlideLine key={line}>{line}</SlideLine>)}
      </SlideText>
    )}
    <SlideTab $right={21} $width={13} $height={23} />
  </SlideCard>
);

/* ---------- ribbon parts ---------- */

const Group = ({ label, width, left, launcher, children }) => (
  <>
    <GroupBox $width={width}>
      <GroupBody $left={left}>{children}</GroupBody>
      <GroupFooter>
        <GroupLabel>{label}</GroupLabel>
        {launcher && <Launcher aria-label={`${label}设置`}><LauncherIcon /></Launcher>}
      </GroupFooter>
    </GroupBox>
    <Divider />
  </>
);

const Cmd = ({ icon, arrow, wide, children }) => (
  <Command>
    {icon}
    <span>{children}</span>
    {arrow && <CommandArrow $wide={wide}><Chevron /></CommandArrow>}
  </Command>
);

const tabs = ["开始", "插入", "设计", "切换", "动画", "幻灯片放映", "审阅", "视图", "帮助", "百度网盘"];

const AppHeader = () => (
  <Header>
    <HeaderColumn>
      <QuickAccess>
        <QuickButton $width={20} $after={12} aria-label="保存"><SaveIcon /></QuickButton>
        <QuickButton $width={22} $after={4} aria-label="撤消"><UndoIcon /></QuickButton>
        <QuickButton $width={11} $after={8} aria-label="撤消选项"><Chevron color="#e08f74" /></QuickButton>
        <QuickButton $width={20} $after={14} aria-label="重复"><RedoIcon /></QuickButton>
        <QuickButton $width={20} $after={17} aria-label="从头开始放映"><SlideShowIcon /></QuickButton>
        <QuickButton $width={12} aria-label="自定义快速访问工具栏"><CustomizeIcon /></QuickButton>
      </QuickAccess>
      <TabBar>
        <Tab $file>文件</Tab>
        {tabs.map((name) => <Tab key={name} $active={name === "开始"}>{name}</Tab>)}
      </TabBar>
    </HeaderColumn>
    <HeaderColumn $dark>
      <ContextTitle>绘图工具</ContextTitle>
      <ContextTab>格式</ContextTab>
    </HeaderColumn>
    <HeaderColumn $grow>
      <DocumentTitle>演示.pptx  -  PowerPoint</DocumentTitle>
      <TellMe><BulbIcon />操作说明搜索</TellMe>
    </HeaderColumn>
  </Header>
);

const Ribbon = () => (
  <RibbonBar>
    <Group label="剪贴板" width={144} left={17} launcher>
      <BigButton $width={32} $after={12}>
        <BigIcon><PasteIcon /></BigIcon>
        <BigLabel>粘贴</BigLabel>
        <BigLabel><Chevron /></BigLabel>
      </BigButton>
      <CommandList>
        <Cmd icon={<CutIcon />}>剪切</Cmd>
        <Cmd icon={<CopyIcon />} arrow wide>复制</Cmd>
        <Cmd icon={<BrushIcon />}>格式刷</Cmd>
      </CommandList>
    </Group>

    <Group label="幻灯片" width={150} left={10}>
      <BigButton $width={54} $after={8}>
        <BigIcon $tall><NewSlideIcon /></BigIcon>
        <BigLabel $tight>新建</BigLabel>
        <BigLabel $tight>幻灯片<Chevron /></BigLabel>
      </BigButton>
      <CommandList>
        <Cmd icon={<LayoutIcon />} arrow>版式</Cmd>
        <Cmd icon={<ResetIcon />}>重置</Cmd>
        <Cmd icon={<SectionIcon />} arrow>节</Cmd>
      </CommandList>
    </Group>

    <Group label="字体" width={328} left={8} launcher>
      <ToolRows>
        <ToolRow>
          <Combo $width={169}>
            <ComboSelect aria-label="字体"><option>宋体 (正文)</option></ComboSelect>
            <Caret />
          </Combo>
          <Combo $width={55}>
            <ComboSelect aria-label="字号"><option>18</option></ComboSelect>
            <Caret />
          </Combo>
          <Tool aria-label="增大字号"><GrowFont /></Tool>
          <Tool aria-label="减小字号"><GrowFont down /></Tool>
          <ToolDivider $gap={2} />
          <Tool aria-label="清除格式"><ClearIcon /></Tool>
        </ToolRow>
        <ToolRow>
          <Tool $bold>B</Tool>
          <Tool $bold $italic>I</Tool>
          <Tool $line="underline">U</Tool>
          <Tool $bold>S</Tool>
          <Tool $size={11} $line="line-through">abc</Tool>
          <Tool aria-label="字符间距"><SpacingIcon /></Tool>
          <Tool $width={10} aria-label="字符间距选项"><Chevron /></Tool>
          <Tool $left={5} $size={13}>Aa</Tool>
          <Tool $width={10} aria-label="大小写选项"><Chevron /></Tool>
          <ToolDivider $gap={5} />
          <Tool aria-label="突出显示"><HighlightIcon /></Tool>
          <Tool $width={16} aria-label="突出显示选项"><Chevron /></Tool>
          <Tool aria-label="字体颜色"><FontColorIcon /></Tool>
          <Tool $width={16} aria-label="字体颜色选项"><Chevron /></Tool>
        </ToolRow>
      </ToolRows>
    </Group>

    <Group label="段落" width={359} left={8} launcher>
      <ToolRows>
        <ToolRow>
          <Tool $on $width={44} aria-label="项目符号"><ListIcon /><Chevron /></Tool>
          <Tool aria-label="编号"><ListIcon color="#a8bddb" line="#bebec4" /></Tool>
          <Tool $width={16} aria-label="编号选项"><Chevron /></Tool>
          <ToolDivider $gap={2} />
          <Tool aria-label="减少缩进"><IndentIcon out /></Tool>
          <Tool aria-label="增加缩进"><IndentIcon /></Tool>
          <ToolDivider $gap={2} />
          <Tool aria-label="行距"><LineSpacingIcon /></Tool>
          <Tool $width={10} aria-label="行距选项"><Chevron /></Tool>
        </ToolRow>
        <ToolRow>
          <Tool $on aria-label="左对齐"><AlignIcon color="#98989e" /></Tool>
          <Tool aria-label="居中"><AlignIcon kind="center" /></Tool>
          <Tool aria-label="右对齐"><AlignIcon kind="right" /></Tool>
          <Tool aria-label="两端对齐"><AlignIcon kind="full" /></Tool>
          <Tool aria-label="分散对齐"><DistributeIcon /></Tool>
          <ToolDivider $gap={2} />
          <Tool aria-label="分栏"><ColumnsIcon /></Tool>
          <Tool $width={10} aria-label="分栏选项"><Chevron /></Tool>
        </ToolRow>
      </ToolRows>
      <CommandList $left={10}>
        <Cmd icon={<DirectionIcon />} arrow>文字方向</Cmd>
        <Cmd icon={<AlignTextIcon />} arrow>对齐文本</Cmd>
        <Cmd icon={<SmartArtIcon />} arrow>转换为 SmartArt</Cmd>
      </CommandList>
    </Group>

    <Group label="绘图" width={384} left={9} launcher>
      <Gallery>
        <GalleryGrid>
          {shapes.map((shape) => (
            <GalleryItem key={shape.d} aria-label="形状"><ShapeGlyph {...shape} /></GalleryItem>
          ))}
        </GalleryGrid>
        <GalleryScroll>
          <ScrollButton $off aria-label="上一行"><Caret color="#b9b9bc" /></ScrollButton>
          <ScrollButton aria-label="下一行"><Caret /></ScrollButton>
          <ScrollButton aria-label="更多形状"><Caret /></ScrollButton>
        </GalleryScroll>
      </Gallery>
      <BigButton $width={30} $after={11}>
        <BigIcon><ArrangeIcon /></BigIcon>
        <BigLabel>排列</BigLabel>
        <BigLabel><Chevron /></BigLabel>
      </BigButton>
      <BigButton $width={56} $after={4}>
        <BigIcon><QuickStyleIcon /></BigIcon>
        <BigLabel>快速样式</BigLabel>
        <BigLabel><Chevron /></BigLabel>
      </BigButton>
      <CommandList>
        <Cmd icon={<FillIcon />} arrow>形状填充</Cmd>
        <Cmd icon={<OutlineIcon />} arrow>形状轮廓</Cmd>
        <Cmd icon={<EffectIcon />} arrow>形状效果</Cmd>
      </CommandList>
    </Group>

    <Group label="编辑" width={92} left={10}>
      <CommandList>
        <Cmd icon={<FindIcon />}>查找</Cmd>
        <Cmd icon={<ReplaceIcon />} arrow wide>替换</Cmd>
        <Cmd icon={<SelectIcon />} arrow>选择</Cmd>
      </CommandList>
    </Group>

    <Group label="保存" width={80} left={12}>
      <BigButton $width={56}>
        <BigIcon $tall><CloudIcon /></BigIcon>
        <BigLabel $tight>保存到</BigLabel>
        <BigLabel $tight>百度网盘</BigLabel>
      </BigButton>
    </Group>
  </RibbonBar>
);

/* ---------- dialog ---------- */

const treeItems = [
  { text: "第一张幻灯片" },
  { text: "最后一张幻灯片" },
  { text: "下一张幻灯片" },
  { text: "上一张幻灯片" },
  { text: "幻灯片标题", open: true },
  { text: "1. ppt目录怎么设置", level: 1 },
  { text: "2. 目录", level: 1 },
  { text: "3. 幻灯片 3", level: 1 },
  { text: "4. 幻灯片 4", level: 1, selected: true },
  { text: "自定义放映" },
];

const HyperlinkDialog = () => (
  <DialogBox role="dialog" aria-labelledby="dialog-title">
    <DialogHeader>
      <DialogTitle id="dialog-title">插入超链接</DialogTitle>
      <DialogControl aria-label="帮助">?</DialogControl>
      <DialogControl aria-label="关闭">
        <Icon w={11}><path d="M.5.500l10 10M10.500.500l-10 10" stroke="#66666a" strokeWidth="1.200" /></Icon>
      </DialogControl>
    </DialogHeader>
    <DialogBody>
      <LinkColumn>
        <LinkHeading>链接到:</LinkHeading>
        <LinkList>
          <LinkItem $height={55} $top={0}><PageIcon kind="web" />现有文件或网...</LinkItem>
          <LinkItem $height={56} $top={0} $active><PageIcon kind="place" />本文档中的位...</LinkItem>
          <LinkItem $height={56} $top={8}><PageIcon kind="new" />新建文档(N)</LinkItem>
          <LinkItem $height={56} $top={0}><PageIcon kind="mail" />电子邮件地...</LinkItem>
        </LinkList>
      </LinkColumn>
      <MainColumn>
        <TextRow>
          <TextLabel htmlFor="display-text">要显示的文字(<u>T</u>):</TextLabel>
          <TextInput id="display-text" defaultValue="订单系统" />
          <DialogButton $width={118}>屏幕提示(<u>P</u>)...</DialogButton>
        </TextRow>
        <Columns>
          <Column>
            <ColumnLabel>请选择文档中的位置(<u>C</u>):</ColumnLabel>
            <Tree>
              {treeItems.map((item) => (
                <TreeItem key={item.text} $level={item.level} $open={item.open}>
                  {item.open && (
                    <TreeToggle>
                      <Icon w={9}><path d="M.5.500h8v8h-8zM2.500 4.500h4" stroke="#c4c4c8" /></Icon>
                    </TreeToggle>
                  )}
                  <TreeLabel $selected={item.selected}>{item.text}</TreeLabel>
                </TreeItem>
              ))}
            </Tree>
          </Column>
          <Column>
            <ColumnLabel>幻灯片预览:</ColumnLabel>
            <Preview>
              <SlideCard $width={260} $height={148} $flat>
                <Banner id="preview" width="242" height="39" />
                <SlideText $top={7} $left={17} $line={6} $size={5}>
                  <SlideLine $heading>订单系统</SlideLine>
                  {orderText.map((line) => <SlideLine key={line}>{line}</SlideLine>)}
                </SlideText>
                <SlideTab $right={22} $width={15} $height={25} />
              </SlideCard>
            </Preview>
            <CheckLabel><CheckInput type="checkbox" />显示并返回(S)</CheckLabel>
          </Column>
        </Columns>
        <DialogFooter>
          <DialogButton $width={95} $primary>确定</DialogButton>
          <DialogButton $width={94}>取消</DialogButton>
        </DialogFooter>
      </MainColumn>
    </DialogBody>
  </DialogBox>
);

export default function App() {
  return (
    <Window>
      <GlobalStyle />
      <AppHeader />
      <Ribbon />
      <Workspace>
        <ThumbPane>
          {[1, 2, 3, 4].map((n) => (
            <ThumbRow key={n}>
              <ThumbNumber $active={n === 2}>{n}</ThumbNumber>
              <ThumbFrame $active={n === 2}><ThumbSlide index={n} /></ThumbFrame>
            </ThumbRow>
          ))}
        </ThumbPane>
        <Canvas>
          <BigSlide>
            <Banner id="main" width="1280" height="202" />
            <Placeholder>
              <BulletMarks><li>▶</li><li>▶</li></BulletMarks>
              <Handle $x="0%" $y="0%" />
              <Handle $x="0%" $y="50%" />
              <Handle $x="0%" $y="100%" />
              <Handle $x="50%" $y="100%" />
            </Placeholder>
          </BigSlide>
        </Canvas>
      </Workspace>
      <HyperlinkDialog />
      <Annotations width="1300" height="840" viewBox="0 0 1300 840" aria-hidden="true">
        <g fill="#fb3a3a">
          <path d="M512 371L576 407 578 401 590 424 565 421 569 415z" />
          <path d="M841.500 472.500L782 534 786 538 763 545.500 771 522 775 526z" />
          <path d="M1121.500 817.500L1174 725 1169 722 1190 709.500 1187 734 1182 731z" />
        </g>
        <path d="M1198 690v15l3.500-3 2.500 5 2.500-1.500-2.500-4.500h5z" fill="#fff" stroke="#b9bfc8" />
      </Annotations>
    </Window>
  );
}
